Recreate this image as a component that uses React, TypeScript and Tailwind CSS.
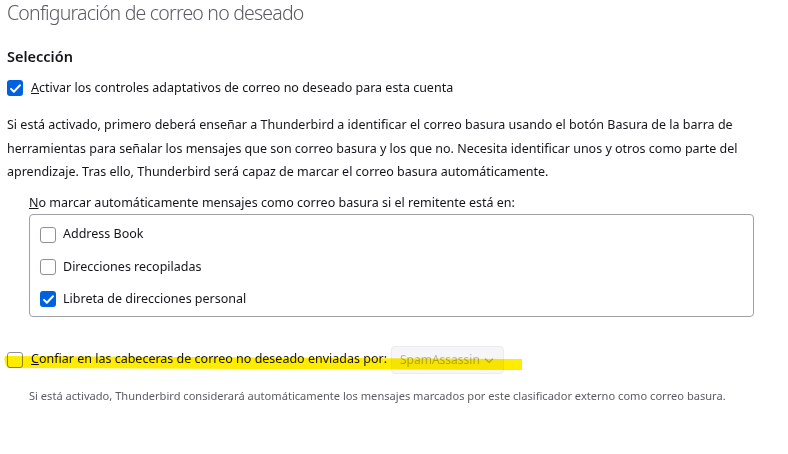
import React from "react";

const Check = ({ checked }: { checked?: boolean }) =>
  checked ? (
    <span className="flex h-4 w-4 shrink-0 items-center justify-center rounded-[3px] bg-[#0061e0]">
      <svg viewBox="0 0 16 16" className="h-[13px] w-[13px]" fill="none" stroke="white" strokeWidth="2.4" strokeLinecap="round" strokeLinejoin="round">
        <path d="M2.5 8.5l3.5 3.5 7.5-8" />
      </svg>
    </span>
  ) : (
    <span className="h-4 w-4 shrink-0 rounded-[3px] border border-[#8f8f9d] bg-white" />
  );

const App = () => {
  return (
    <div className="relative h-[454px] w-[788px] overflow-hidden bg-white pl-[7px] font-['Noto_Sans',sans-serif] text-[12.5px] text-[#15141a]">
      <h1 className="text-[19.5px] font-light leading-[26px] tracking-[-0.8px] text-[#5b5b66]">
        Configuración de correo no deseado
      </h1>

      <h2 className="mt-[18px] text-[14.5px] font-semibold leading-[24px]">Selección</h2>

      <label className="mt-[9px] flex h-[22px] items-center gap-[8px]">
        <Check checked />
        <span>
          <span className="underline">A</span>ctivar los controles adaptativos de correo no deseado para esta cuenta
        </span>
      </label>

      <p className="mt-[14px] leading-[23.5px]">
        Si está activado, primero deberá enseñar a Thunderbird a identificar el correo basura usando el botón Basura de la barra de
        <br />
        herramientas para señalar los mensajes que son correo basura y los que no. Necesita identificar unos y otros como parte del
        <br />
        aprendizaje. Tras ello, Thunderbird será capaz de marcar el correo basura automáticamente.
      </p>

      <div className="ml-[22px] mt-[8px] w-[725px]">
        <div className="leading-[22px]">
          <span className="underline">N</span>o marcar automáticamente mensajes como correo basura si el remitente está en:
        </div>
        <div className="flex h-[103px] flex-col rounded-[4px] border border-[#a0a0a8] px-[10px] pt-[4px]">
          {[
            ["Address Book", false],
            ["Direcciones recopiladas", false],
            ["Libreta de direcciones personal", true],
          ].map(([name, on]) => (
            <label key={name as string} className="flex h-[33px] items-center gap-[7px]">
              <Check checked={on as boolean} />
              <span>{name as string}</span>
            </label>
          ))}
        </div>
      </div>

      <div className="mt-[29px] flex h-[28px] items-center">
        <Check />
        <span className="ml-[8px]">
          <span className="underline">C</span>onfiar en las cabeceras de correo no deseado enviadas por:
        </span>
        <div className="ml-[4px] flex h-[28px] w-[113px] items-center justify-between rounded-[4px] border border-[#ececf0] bg-[#f6f6f8] pl-[8px] pr-[8px] text-[12px] text-[#b4b4bc]">
          <span>SpamAssassin</span>
          <svg viewBox="0 0 12 12" className="h-3 w-3" fill="none" stroke="#b4b4bc" strokeWidth="1.2">
            <path d="M2 4.5l4 4 4-4" />
          </svg>
        </div>
      </div>

      <p className="ml-[22px] mt-[12px] text-[11.1px] leading-[20px] text-[#5b5b66]">
        Si está activado, Thunderbird considerará automáticamente los mensajes marcados por este clasificador externo como correo basura.
      </p>

      <svg className="pointer-events-none absolute left-0 top-0 mix-blend-multiply" width="788" height="454">
        <path d="M5 356 L522 359 L522 370 L8 368 Q3 362 5 356 Z" fill="#ffec00" />
      </svg>
    </div>
  );
};

export default App;
